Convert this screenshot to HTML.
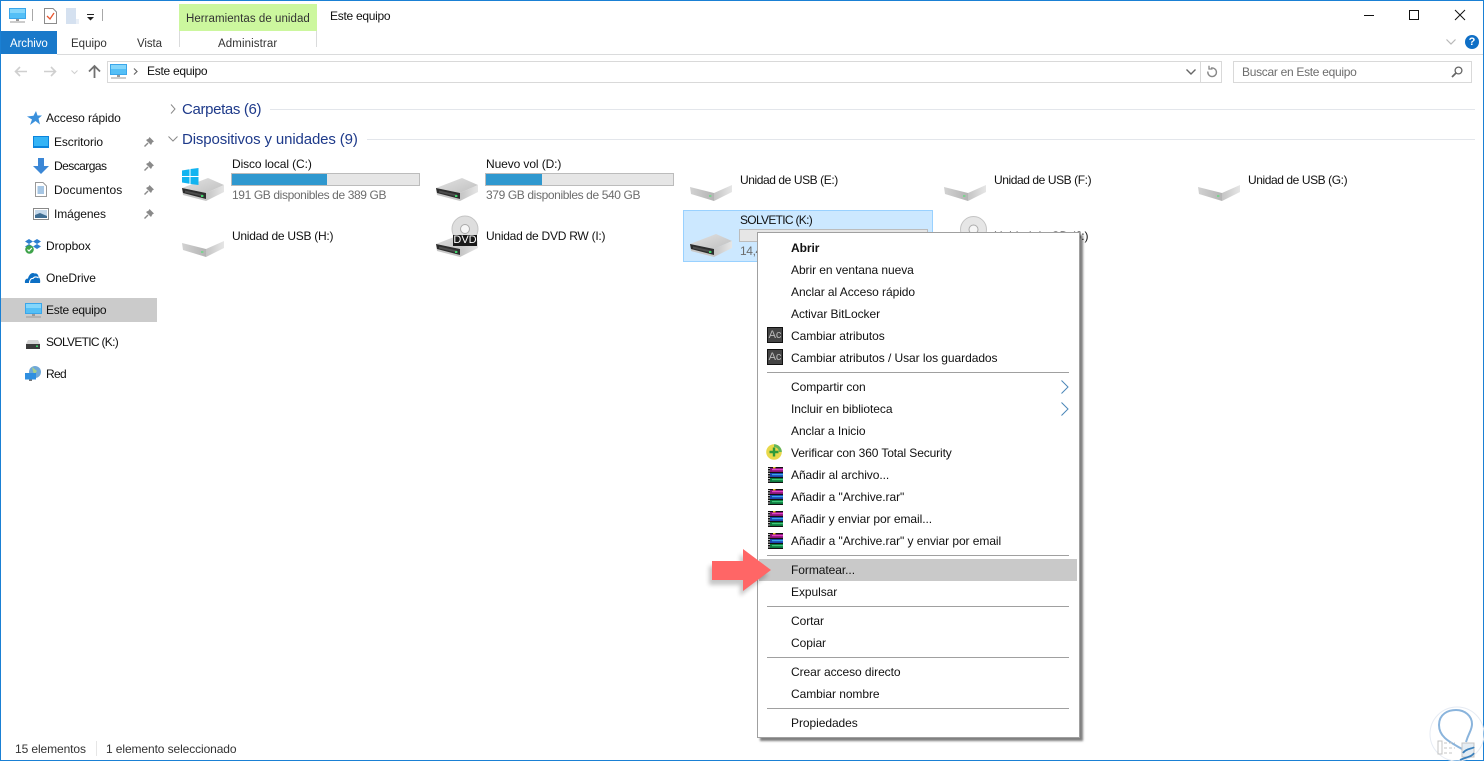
<!DOCTYPE html>
<html lang="es"><head><meta charset="utf-8"><title>Este equipo</title>
<style>
html,body{margin:0;padding:0;background:#fff}
#w{position:relative;width:1484px;height:761px;overflow:hidden;background:#fff;font:12px/16px "Liberation Sans",sans-serif;color:#111}
.t{position:absolute;white-space:nowrap;letter-spacing:-.1px}
.b{position:absolute}
svg.i{position:absolute;overflow:visible}
.g{color:#6d6d6d;letter-spacing:-.38px}
.h{font-size:15px;line-height:20px;color:#1e3a8a}
.u{letter-spacing:-.42px}
.bar{position:absolute;width:187px;height:11px;background:#e6e6e6;border:1px solid #bcbcbc}
.bar i{display:block;height:100%;background:#2f98cf}
#menu{position:absolute;left:757px;top:232px;width:321px;height:504px;background:#fff;border:1px solid #a0a0a0;box-shadow:3px 3px 2px rgba(0,0,0,.5);z-index:5}
.m{position:absolute;left:33px;white-space:nowrap;letter-spacing:-.06px;color:#111}
.s{position:absolute;left:9px;width:302px;height:1px;background:#a0a0a0}
</style></head><body><div id="w">
<svg width="0" height="0" style="position:absolute"><defs>
<linearGradient id="tp" x1="0" y1="0" x2="1" y2="1"><stop offset="0" stop-color="#e2e2e2"/><stop offset="1" stop-color="#c0c0c0"/></linearGradient>
<linearGradient id="rt" x1="0" y1="0" x2="1" y2="0"><stop offset="0" stop-color="#c4c4c4"/><stop offset="1" stop-color="#e6e6e6"/></linearGradient>
<linearGradient id="fr" x1="0" y1="0" x2="1" y2="0"><stop offset="0" stop-color="#d2d2d2"/><stop offset="1" stop-color="#b4b4b4"/></linearGradient>
<symbol id="disk" viewBox="0 0 42 24"><path d="M0 11L26 1L42 8L24 16Z" fill="url(#tp)"/><path d="M0 11L24 16V24L1 18Z" fill="#c8c8c8"/><path d="M0 11L24 16V22L1 16Z" fill="#2d2d2d"/><path d="M3 13.500L21 17.500V19.500L3 15.500Z" fill="#4d4d4d"/><path d="M24 16L42 8V15L24 24Z" fill="url(#rt)"/><rect x="19" y="18" width="2.400" height="2" fill="#3fd46b"/></symbol>
<symbol id="usb" viewBox="0 0 42 24"><path d="M0 10L24 16V24L1 17Z" fill="url(#fr)"/><path d="M24 16L42 8V15L24 24Z" fill="url(#rt)"/><rect x="19" y="18" width="2.400" height="2" fill="#7bd28f"/></symbol>
<symbol id="mon" viewBox="0 0 17 16"><rect x="0.500" y="0.500" width="16" height="10" fill="#54bff6" stroke="#3aa6ea"/><rect x="1" y="1" width="15" height="4" fill="#84d6fb"/><rect x="7" y="11" width="3" height="2" fill="#999"/><rect x="1" y="13.500" width="15" height="1" fill="#999"/></symbol>
<symbol id="pin" viewBox="0 0 10 10"><path d="M5.500 0L10 4.500L8.500 5.300L7 8L2 3L4.700 1.500Z" fill="#8a8a8a"/><path d="M4 6L.5 9.500" stroke="#8a8a8a" stroke-width="1.400"/></symbol>
<symbol id="rar" viewBox="0 0 16 16"><rect x="1" y="0" width="15" height="16" fill="#111"/><rect x="3" y="1" width="13" height="4" fill="#8a1578"/><rect x="5" y="2" width="11" height="1.200" fill="#e040c8"/><rect x="3" y="6" width="13" height="4" fill="#1c46b0"/><rect x="5" y="7" width="11" height="1.200" fill="#38a8ea"/><rect x="3" y="11" width="13" height="4" fill="#0e7a3e"/><rect x="5" y="12" width="11" height="1.200" fill="#3dc878"/><path d="M0 1.500h3M0 4h3M0 6.500h3M0 9h3M0 11.500h3M0 14h3" stroke="#fff" stroke-width=".8"/><rect x="6" y="0" width="2.500" height="1.500" fill="#e8c030"/></symbol>
</defs></svg>

<!-- window border -->
<div class="b" style="left:0;top:0;width:1484px;height:1px;background:#1a80d4"></div>
<div class="b" style="left:0;top:760px;width:1484px;height:1px;background:#1a80d4"></div>
<div class="b" style="left:0;top:0;width:1px;height:761px;background:#1a80d4"></div>
<div class="b" style="left:1483px;top:0;width:1px;height:761px;background:#1a80d4"></div>

<!-- title bar -->
<svg class="i" style="left:9px;top:8px" width="17" height="16"><use href="#mon"/></svg>
<div class="b" style="left:32px;top:9px;width:1px;height:12px;background:#a8a8a8"></div>
<svg class="i" style="left:44px;top:8px" width="13" height="16" viewBox="0 0 13 16"><path d="M.5.5H9L12.500 4V15.500H.5Z" fill="#fff" stroke="#8c8c8c"/><path d="M3 8L6 11L10 5" fill="none" stroke="#e8552e" stroke-width="1.300"/></svg>
<svg class="i" style="left:66px;top:8px" width="13" height="16" viewBox="0 0 13 16"><path d="M0 0H10V11H13V16H0Z" fill="#d5e1f0"/><path d="M10 11V16H13V11Z" fill="#e9eff7"/></svg>
<svg class="i" style="left:86px;top:14px" width="9" height="7" viewBox="0 0 9 7"><rect x="1" y="0" width="7" height="1" fill="#222"/><path d="M1 3H8L4.500 6.500Z" fill="#222"/></svg>
<div class="b" style="left:102px;top:9px;width:1px;height:12px;background:#a8a8a8"></div>
<div class="b" style="left:179px;top:4px;width:138px;height:27px;background:#ccf79e"></div>
<div class="t" style="left:186px;top:11px;color:#333;letter-spacing:.05px;font-size:11.500px">Herramientas de unidad</div>
<div class="t" style="left:330px;top:8px;letter-spacing:-.28px">Este equipo</div>
<div class="b" style="left:1364px;top:15px;width:10px;height:1px;background:#111"></div>
<div class="b" style="left:1409px;top:10px;width:8px;height:8px;border:1px solid #111"></div>
<svg class="i" style="left:1455px;top:10px" width="10" height="10" viewBox="0 0 10 10"><path d="M0 0L10 10M10 0L0 10" stroke="#111" stroke-width="1"/></svg>

<!-- tabs -->
<div class="b" style="left:1px;top:31px;width:56px;height:23px;background:#1979ca"></div>
<div class="t" style="left:10px;top:36px;color:#fff;font-size:11.500px">Archivo</div>
<div class="t" style="left:71px;top:36px;color:#333;font-size:11.500px;letter-spacing:0">Equipo</div>
<div class="t" style="left:137px;top:36px;color:#333;font-size:11.500px">Vista</div>
<div class="b" style="left:179px;top:31px;width:1px;height:16px;background:#dadbdc"></div>
<div class="b" style="left:316px;top:31px;width:1px;height:16px;background:#dadbdc"></div>
<div class="t" style="left:218px;top:36px;color:#333;font-size:11.500px;letter-spacing:.1px">Administrar</div>
<div class="b" style="left:57px;top:54px;width:1426px;height:1px;background:#dadbdc"></div>
<svg class="i" style="left:1446px;top:39px" width="10" height="6" viewBox="0 0 10 6"><path d="M.5.5L5 5L9.500.5" fill="none" stroke="#b8b8b8" stroke-width="1.200"/></svg>
<div class="b" style="left:1465px;top:35px;width:14px;height:14px;border-radius:50%;background:#0f6fc6;color:#fff;font:bold 11px/14px 'Liberation Sans',sans-serif;text-align:center">?</div>

<!-- nav -->
<svg class="i" style="left:14px;top:66px" width="13" height="11" viewBox="0 0 13 11"><path d="M6 1L1.500 5.500L6 10M1.500 5.500H13" fill="none" stroke="#cfcfcf" stroke-width="1.600"/></svg>
<svg class="i" style="left:44px;top:66px" width="13" height="11" viewBox="0 0 13 11"><path d="M7 1L11.500 5.500L7 10M11.500 5.500H0" fill="none" stroke="#cfcfcf" stroke-width="1.600"/></svg>
<svg class="i" style="left:71px;top:70px" width="7" height="4" viewBox="0 0 7 4"><path d="M.5.5L3.500 3.500L6.500.5" fill="none" stroke="#cfcfcf"/></svg>
<svg class="i" style="left:88px;top:65px" width="13" height="13" viewBox="0 0 13 13"><path d="M1 6.500L6.500 1L12 6.500M6.500 1V13" fill="none" stroke="#707070" stroke-width="1.800"/></svg>
<div class="b" style="left:107px;top:61px;width:1113px;height:20px;border:1px solid #d9d9d9"></div>
<div class="b" style="left:1200px;top:61px;width:1px;height:21px;background:#d9d9d9"></div>
<svg class="i" style="left:110px;top:64px" width="17" height="16"><use href="#mon"/></svg>
<svg class="i" style="left:133px;top:68px" width="5" height="7" viewBox="0 0 5 7"><path d="M1 .5L4 3.500L1 6.500" fill="none" stroke="#666" stroke-width="1.200"/></svg>
<div class="t" style="left:147px;top:63px;letter-spacing:-.28px">Este equipo</div>
<svg class="i" style="left:1186px;top:69px" width="10" height="6" viewBox="0 0 10 6"><path d="M.5.5L5 5L9.500.5" fill="none" stroke="#666" stroke-width="1.400"/></svg>
<svg class="i" style="left:1206px;top:65px" width="12" height="13" viewBox="0 0 12 13"><path d="M5 3.100A4.300 4.300 0 1 1 1.900 6.500" fill="none" stroke="#888" stroke-width="1.400"/><path d="M3 .8V4H6.500" fill="none" stroke="#888" stroke-width="1.300"/></svg>
<div class="b" style="left:1233px;top:61px;width:237px;height:20px;border:1px solid #d9d9d9"></div>
<div class="t" style="left:1242px;top:64px;color:#6d6d6d;letter-spacing:-.3px">Buscar en Este equipo</div>
<svg class="i" style="left:1451px;top:66px" width="12" height="12" viewBox="0 0 12 12"><circle cx="7.500" cy="4.500" r="3.400" fill="none" stroke="#666" stroke-width="1.300"/><path d="M5 7L1 11" stroke="#666" stroke-width="1.800"/></svg>

<!-- sidebar -->
<div class="b" style="left:1px;top:298px;width:156px;height:24px;background:#cbcbcb"></div>
<svg class="i" style="left:27px;top:111px" width="15" height="15" viewBox="0 0 15 15"><path d="M9 0L10.500 4.500H15L11.500 7.500L13 13.500L8.500 10L3 14L5 8.500L0 5.500L6.500 4.800Z" fill="#3a90dc"/></svg>
<div class="t" style="left:46px;top:110px">Acceso rápido</div>
<svg class="i" style="left:33px;top:136px" width="16" height="12" viewBox="0 0 16 12"><rect width="16" height="12" fill="#0b84dc"/><rect x="1" y="1" width="14" height="9" fill="#35b4f6"/></svg>
<div class="t" style="left:54px;top:134px">Escritorio</div>
<svg class="i" style="left:33px;top:158px" width="16" height="16" viewBox="0 0 16 16"><path d="M5 0H11V8H16L8 16L0 8H5Z" fill="#3b87d6"/></svg>
<div class="t" style="left:54px;top:158px;letter-spacing:-.55px">Descargas</div>
<svg class="i" style="left:35px;top:182px" width="12" height="15" viewBox="0 0 12 15"><path d="M.5.5H8L11.500 4V14.500H.5Z" fill="#fff" stroke="#999"/><path d="M2.500 5H9M2.500 7H9M2.500 9H9M2.500 11H9" stroke="#4d8cc8" stroke-width="1"/></svg>
<div class="t" style="left:54px;top:182px;letter-spacing:.1px">Documentos</div>
<svg class="i" style="left:33px;top:208px" width="16" height="12" viewBox="0 0 16 12"><rect x=".5" y=".5" width="15" height="11" fill="#fff" stroke="#888"/><rect x="2" y="2" width="12" height="8" fill="#c4d8ea"/><path d="M2 7L7 5L14 8V10H2Z" fill="#3f6d92"/></svg>
<div class="t" style="left:54px;top:206px">Imágenes</div>
<svg class="i" style="left:144px;top:137px" width="10" height="10"><use href="#pin"/></svg>
<svg class="i" style="left:144px;top:161px" width="10" height="10"><use href="#pin"/></svg>
<svg class="i" style="left:144px;top:185px" width="10" height="10"><use href="#pin"/></svg>
<svg class="i" style="left:144px;top:209px" width="10" height="10"><use href="#pin"/></svg>
<svg class="i" style="left:25px;top:239px" width="16" height="15" viewBox="0 0 16 15"><path d="M4 0L8 2.500L4 5L0 2.500ZM12 0L16 2.500L12 5L8 2.500ZM4 5L8 7.500L4 10L0 7.500ZM12 5L16 7.500L12 10L8 7.500Z" fill="#2d7fd0"/><circle cx="4.500" cy="10.500" r="4.300" fill="#3ea34a"/><path d="M2.500 10.500L4 12L6.800 9" fill="none" stroke="#fff" stroke-width="1.200"/></svg>
<div class="t" style="left:46px;top:238px">Dropbox</div>
<svg class="i" style="left:25px;top:272px" width="15" height="11" viewBox="0 0 15 11"><path d="M0 11C-.5 8 1 6.500 3 6.500C4 2.500 7 0 9.500 1.500C12 1 13.500 3 13.500 5C15 6 15.500 9 15 11Z" fill="#0c6fc4"/><path d="M4.500 11C4.500 8 6 6 8 6.500C9 4.500 12 4.500 13.500 6" fill="none" stroke="#fff" stroke-width="1.100"/></svg>
<div class="t" style="left:46px;top:270px">OneDrive</div>
<svg class="i" style="left:25px;top:303px" width="17" height="16"><use href="#mon"/></svg>
<div class="t" style="left:46px;top:302px;letter-spacing:-.28px">Este equipo</div>
<svg class="i" style="left:26px;top:340px" width="14" height="9" viewBox="0 0 14 9"><path d="M2 0H12L14 4H0Z" fill="#d4d4d4"/><rect y="4" width="14" height="5" fill="#3a3a3a"/><rect x="10" y="5.500" width="2" height="1.500" fill="#3fd46b"/></svg>
<div class="t" style="left:46px;top:334px;letter-spacing:-.7px">SOLVETIC (K:)</div>
<svg class="i" style="left:25px;top:366px" width="16" height="16" viewBox="0 0 16 16"><circle cx="10" cy="6" r="6" fill="#6fa8d8"/><path d="M7 1L12 5L9 9Z" fill="#a8d08a"/><rect x="0" y="7" width="11" height="6.500" fill="#2f8fe0"/><rect x="4" y="13.500" width="3" height="1.500" fill="#777"/></svg>
<div class="t" style="left:46px;top:366px;letter-spacing:-.7px">Red</div>

<!-- group headers -->
<svg class="i" style="left:170px;top:104px" width="6" height="10" viewBox="0 0 6 10"><path d="M1 .5L5 5L1 9.500" fill="none" stroke="#8a8a8a"/></svg>
<div class="t h" style="left:182px;top:100px;letter-spacing:-.35px">Carpetas (6)</div>
<div class="b" style="left:270px;top:109px;width:1205px;height:1px;background:#e3e6eb"></div>
<svg class="i" style="left:168px;top:136px" width="10" height="6" viewBox="0 0 10 6"><path d="M.5.5L5 5L9.500.5" fill="none" stroke="#8a8a8a"/></svg>
<div class="t h" style="left:182px;top:130px;letter-spacing:-.13px">Dispositivos y unidades (9)</div>
<div class="b" style="left:367px;top:139px;width:1108px;height:1px;background:#e3e6eb"></div>

<!-- drives row 1 -->
<svg class="i" style="left:182px;top:177px" width="42" height="24"><use href="#disk"/></svg>
<svg class="i" style="left:182px;top:168px" width="17" height="17" viewBox="0 0 17 17"><path d="M0 2.500L7.500 1.200V8H0ZM8.500 1L16.500 0V8H8.500ZM0 9H7.500V15.800L0 14.500ZM8.500 9H16.500V17L8.500 16Z" fill="#12b4f0"/></svg>
<div class="t" style="left:232px;top:156px">Disco local (C:)</div>
<div class="bar" style="left:231px;top:173px"><i style="width:95px"></i></div>
<div class="t g" style="left:232px;top:187px">191 GB disponibles de 389 GB</div>

<svg class="i" style="left:436px;top:177px" width="42" height="24"><use href="#disk"/></svg>
<div class="t" style="left:486px;top:156px">Nuevo vol (D:)</div>
<div class="bar" style="left:485px;top:173px"><i style="width:56px"></i></div>
<div class="t g" style="left:486px;top:187px">379 GB disponibles de 540 GB</div>

<svg class="i" style="left:690px;top:177px" width="42" height="24"><use href="#usb"/></svg>
<div class="t u" style="left:740px;top:172px">Unidad de USB (E:)</div>
<svg class="i" style="left:944px;top:177px" width="42" height="24"><use href="#usb"/></svg>
<div class="t u" style="left:994px;top:172px">Unidad de USB (F:)</div>
<svg class="i" style="left:1198px;top:177px" width="42" height="24"><use href="#usb"/></svg>
<div class="t u" style="left:1248px;top:172px">Unidad de USB (G:)</div>

<!-- drives row 2 -->
<svg class="i" style="left:182px;top:233px" width="42" height="24"><use href="#usb"/></svg>
<div class="t" style="left:232px;top:228px;letter-spacing:-.27px">Unidad de USB (H:)</div>
<svg class="i" style="left:436px;top:233px" width="42" height="24"><use href="#disk"/></svg>
<svg class="i" style="left:451px;top:216px" width="28" height="30" viewBox="0 0 28 30"><circle cx="14" cy="13" r="13" fill="#dedede" stroke="#c4c4c4"/><circle cx="14" cy="13" r="4.500" fill="#f6f6f6" stroke="#aaa"/></svg>
<div class="b" style="left:453px;top:235px;width:24px;height:11px;background:#1a1a1a;color:#fff;font:11px/11px 'Liberation Sans',sans-serif;text-align:center">DVD</div>
<div class="t" style="left:486px;top:228px;letter-spacing:-.25px">Unidad de DVD RW (I:)</div>

<div class="b" style="left:683px;top:210px;width:248px;height:50px;background:#cce8ff;border:1px solid #99d1ff"></div>
<svg class="i" style="left:690px;top:233px" width="42" height="24"><use href="#disk"/></svg>
<div class="t" style="left:740px;top:212px;letter-spacing:-.7px">SOLVETIC (K:)</div>
<div class="bar" style="left:739px;top:229px"></div>
<div class="t g" style="left:740px;top:243px">14,4 GB</div>

<svg class="i" style="left:960px;top:216px" width="27" height="27" viewBox="0 0 27 27"><circle cx="13.500" cy="13.500" r="13" fill="#e6e6e6" stroke="#c4c4c4"/><circle cx="13.500" cy="13.500" r="4.500" fill="#f6f6f6" stroke="#aaa"/></svg>
<div class="t" style="left:994px;top:228px">Unidad de CD (J:)</div>

<!-- context menu -->
<div id="menu">
<div class="m" style="top:7px;font-weight:bold">Abrir</div>
<div class="m" style="top:29px">Abrir en ventana nueva</div>
<div class="m" style="top:51px">Anclar al Acceso rápido</div>
<div class="m" style="top:73px">Activar BitLocker</div>
<div class="b" style="left:9px;top:94px;width:14px;height:14px;background:#444;border:1px solid #111;color:#bbb;font:11px/14px 'Liberation Sans',sans-serif;text-align:center">Ac</div>
<div class="m" style="top:95px">Cambiar atributos</div>
<div class="b" style="left:9px;top:116px;width:14px;height:14px;background:#444;border:1px solid #111;color:#bbb;font:11px/14px 'Liberation Sans',sans-serif;text-align:center">Ac</div>
<div class="m" style="top:117px">Cambiar atributos / Usar los guardados</div>
<div class="s" style="top:139px"></div>
<div class="m" style="top:146px">Compartir con</div>
<svg class="i" style="left:303px;top:147px" width="8" height="14" viewBox="0 0 8 14"><path d="M.5.5L7 7L.5 13.500" fill="none" stroke="#4a86b8"/></svg>
<div class="m" style="top:168px">Incluir en biblioteca</div>
<svg class="i" style="left:303px;top:169px" width="8" height="14" viewBox="0 0 8 14"><path d="M.5.5L7 7L.5 13.500" fill="none" stroke="#4a86b8"/></svg>
<div class="m" style="top:190px">Anclar a Inicio</div>
<svg class="i" style="left:8px;top:211px" width="16" height="16" viewBox="0 0 16 16"><circle cx="8" cy="8" r="7.800" fill="#e8d84a"/><path d="M8 .2A7.800 7.800 0 0 1 15.800 8H13A5 5 0 0 0 8 3Z" fill="#63b55a"/><path d="M8 3.500V12.500M3.500 8H12.500" stroke="#2d9a3a" stroke-width="2.400"/></svg>
<div class="m" style="top:212px;letter-spacing:-.12px">Verificar con 360 Total Security</div>
<svg class="i" style="left:9px;top:234px" width="16" height="16"><use href="#rar"/></svg>
<div class="m" style="top:234px">Añadir al archivo...</div>
<svg class="i" style="left:9px;top:256px" width="16" height="16"><use href="#rar"/></svg>
<div class="m" style="top:256px">Añadir a "Archive.rar"</div>
<svg class="i" style="left:9px;top:278px" width="16" height="16"><use href="#rar"/></svg>
<div class="m" style="top:278px">Añadir y enviar por email...</div>
<svg class="i" style="left:9px;top:300px" width="16" height="16"><use href="#rar"/></svg>
<div class="m" style="top:300px">Añadir a "Archive.rar" y enviar por email</div>
<div class="s" style="top:322px"></div>
<div class="b" style="left:1px;top:326px;width:318px;height:22px;background:#c9c9c9"></div>
<div class="m" style="top:329px">Formatear...</div>
<div class="m" style="top:351px">Expulsar</div>
<div class="s" style="top:373px"></div>
<div class="m" style="top:380px">Cortar</div>
<div class="m" style="top:402px">Copiar</div>
<div class="s" style="top:424px"></div>
<div class="m" style="top:431px">Crear acceso directo</div>
<div class="m" style="top:453px">Cambiar nombre</div>
<div class="s" style="top:475px"></div>
<div class="m" style="top:482px">Propiedades</div>
</div>

<!-- arrow -->
<svg class="i" style="left:705px;top:545px;z-index:6" width="72" height="52" viewBox="0 0 72 52"><path d="M5 18H36V6L64 27L36 48V37H5Z" fill="#000" opacity=".22" transform="translate(-1 3)" style="filter:blur(2px)"/><path d="M7 16H38V4L66 25L38 46V35H7Z" fill="#ff6666"/></svg>

<!-- status bar -->
<div class="t" style="left:15px;top:741px;color:#333">15 elementos</div>
<div class="b" style="left:96px;top:741px;width:1px;height:15px;background:#e6e6e6"></div>
<div class="t" style="left:106px;top:741px;color:#333">1 elemento seleccionado</div>

<!-- watermark -->
<svg class="i" style="left:1428px;top:705px" width="56" height="56" viewBox="0 0 56 56"><circle cx="29" cy="29" r="27" fill="none" stroke="#e6ebf3" stroke-width="1"/><path d="M34 44C24 38 11 33 11 20C11 9 20 5 28 5C37 5 44 11 44 19C44 25 41 27 38 37" fill="none" stroke="#8ab4dc" stroke-width="2"/><rect x="10" y="36" width="4" height="13" fill="none" stroke="#c4c4c4"/><path d="M16 38h11M16 43h11M16 48h9" fill="none" stroke="#c4c4c4" stroke-dasharray="3 2"/><rect x="34" y="38" width="12" height="14" fill="#e4ecf3" stroke="#c4c4c4"/><path d="M35 48C38 43 45 44 46 42M32 55C38 52 44 52 46 48" fill="none" stroke="#3b80bc" stroke-width="1.800"/></svg>
</div></body></html>
